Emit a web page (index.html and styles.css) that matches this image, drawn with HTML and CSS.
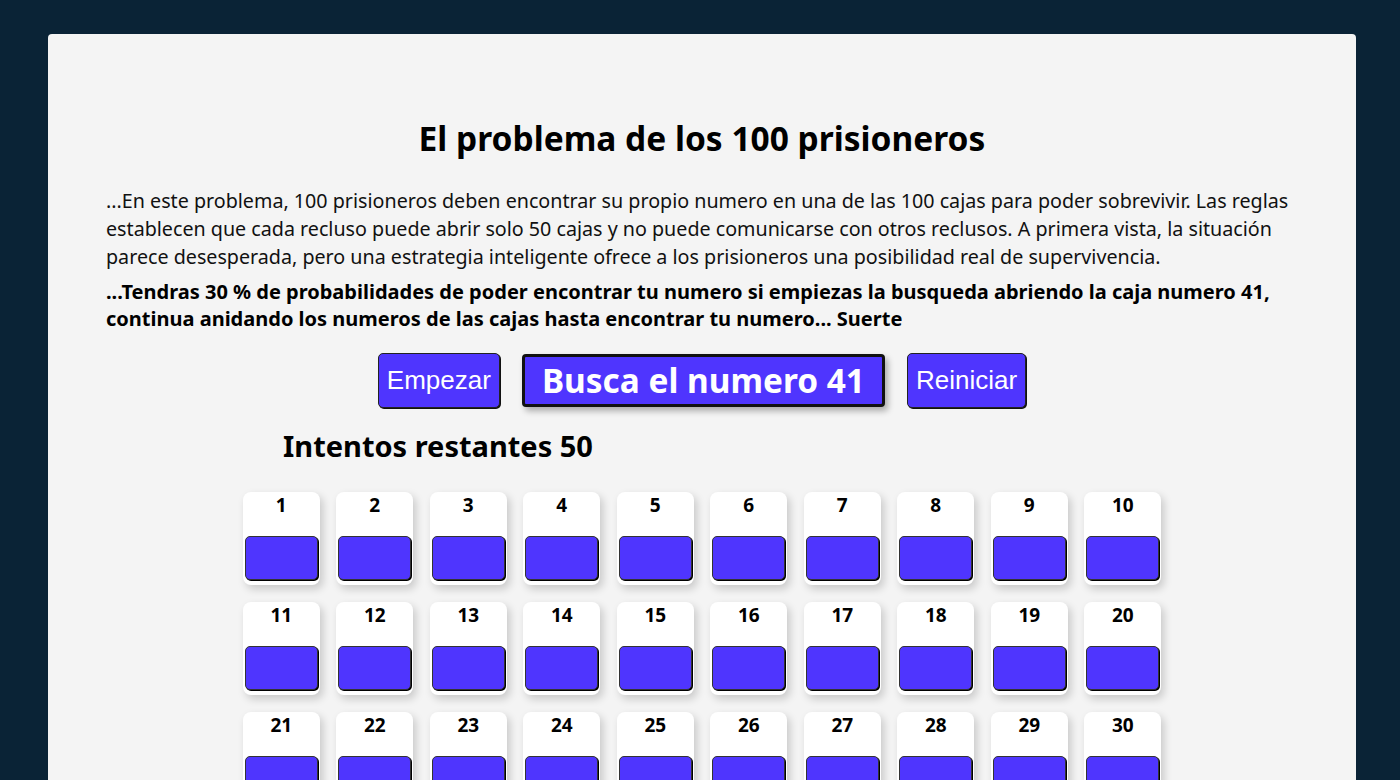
FILE: index.html
```html
<!DOCTYPE html>
<html lang="es">
<head>
<meta charset="utf-8">
<title>El problema de los 100 prisioneros</title>
<link rel="stylesheet" href="styles.css">
</head>
<body>
<main class="panel">
  <h1 class="title">El problema de los 100 prisioneros</h1>
  <p class="intro">...En este problema, 100 prisioneros deben encontrar su propio numero en una de las 100 cajas para poder sobrevivir. Las reglas establecen que cada recluso puede abrir solo 50 cajas y no puede comunicarse con otros reclusos. A primera vista, la situación parece desesperada, pero una estrategia inteligente ofrece a los prisioneros una posibilidad real de supervivencia.</p>
  <p class="hint">...Tendras 30 % de probabilidades de poder encontrar tu numero si empiezas la busqueda abriendo la caja numero 41, continua anidando los numeros de las cajas hasta encontrar tu numero... Suerte</p>
  <div class="controls">
    <button class="btn">Empezar</button>
    <div class="target">Busca el numero 41</div>
    <button class="btn">Reiniciar</button>
  </div>
  <h2 class="tries">Intentos restantes 50</h2>
  <div class="grid">
    <div class="card"><span class="num">1</span><button class="box"></button></div>
    <div class="card"><span class="num">2</span><button class="box"></button></div>
    <div class="card"><span class="num">3</span><button class="box"></button></div>
    <div class="card"><span class="num">4</span><button class="box"></button></div>
    <div class="card"><span class="num">5</span><button class="box"></button></div>
    <div class="card"><span class="num">6</span><button class="box"></button></div>
    <div class="card"><span class="num">7</span><button class="box"></button></div>
    <div class="card"><span class="num">8</span><button class="box"></button></div>
    <div class="card"><span class="num">9</span><button class="box"></button></div>
    <div class="card"><span class="num">10</span><button class="box"></button></div>
    <div class="card"><span class="num">11</span><button class="box"></button></div>
    <div class="card"><span class="num">12</span><button class="box"></button></div>
    <div class="card"><span class="num">13</span><button class="box"></button></div>
    <div class="card"><span class="num">14</span><button class="box"></button></div>
    <div class="card"><span class="num">15</span><button class="box"></button></div>
    <div class="card"><span class="num">16</span><button class="box"></button></div>
    <div class="card"><span class="num">17</span><button class="box"></button></div>
    <div class="card"><span class="num">18</span><button class="box"></button></div>
    <div class="card"><span class="num">19</span><button class="box"></button></div>
    <div class="card"><span class="num">20</span><button class="box"></button></div>
    <div class="card"><span class="num">21</span><button class="box"></button></div>
    <div class="card"><span class="num">22</span><button class="box"></button></div>
    <div class="card"><span class="num">23</span><button class="box"></button></div>
    <div class="card"><span class="num">24</span><button class="box"></button></div>
    <div class="card"><span class="num">25</span><button class="box"></button></div>
    <div class="card"><span class="num">26</span><button class="box"></button></div>
    <div class="card"><span class="num">27</span><button class="box"></button></div>
    <div class="card"><span class="num">28</span><button class="box"></button></div>
    <div class="card"><span class="num">29</span><button class="box"></button></div>
    <div class="card"><span class="num">30</span><button class="box"></button></div>
  </div>
</main>
</body>
</html>
```

FILE: styles.css
```css
html, body {
  margin: 0;
  padding: 0;
}
body {
  background: #0a2336;
  font-family: "Noto Sans", "Open Sans", sans-serif;
  color: #000;
  padding: 34px 44px 0 48px;
  height: 780px;
  box-sizing: border-box;
  overflow: hidden;
}
.panel {
  background: #f4f4f4;
  border-radius: 4px;
  padding: 82px 58px 40px 58px;
  min-height: 900px;
}
.title {
  margin: 0;
  text-align: center;
  font-size: 33.5px;
  line-height: 44px;
  font-weight: 700;
}
.intro {
  margin: 27px 0 0 0;
  font-size: 19.7px;
  line-height: 28px;
  color: #111;
}
.hint {
  margin: 7px 0 0 0;
  font-size: 20px;
  line-height: 27px;
  font-weight: 700;
}
.controls {
  display: flex;
  justify-content: center;
  align-items: center;
  gap: 22px;
  margin-top: 21px;
}
.btn {
  background: #4f35fe;
  color: #fff;
  font-family: "Liberation Sans", Arial, sans-serif;
  font-size: 26px;
  border: 1px solid #222;
  border-radius: 5px;
  height: 55px;
  padding: 0 8px;
  box-shadow: 1px 1px 0 #111;
}
.target {
  background: #4f35fe;
  color: #fff;
  font-size: 33.4px;
  font-weight: 700;
  border: 3px solid #111;
  border-radius: 4px;
  height: 47px;
  line-height: 47px;
  padding: 0 17px;
  box-shadow: 3px 4px 6px rgba(0,0,0,0.3);
}
.tries {
  margin: 18px 0 0 177px;
  font-size: 29px;
  line-height: 40px;
  font-weight: 700;
}
.grid {
  display: grid;
  grid-template-columns: repeat(10, 77px);
  column-gap: 16.5px;
  row-gap: 17px;
  justify-content: center;
  margin-top: 26px;
}
.card {
  background: #fff;
  border-radius: 8px;
  height: 93px;
  display: flex;
  flex-direction: column;
  align-items: center;
  padding: 0 2px 5px;
  box-sizing: border-box;
  box-shadow: 3px 4px 8px rgba(0,0,0,0.18);
}
.num {
  font-size: 19px;
  font-weight: 700;
  line-height: 26px;
  height: 44px;
  flex: none;
}
.box {
  flex: none;
  width: 73px;
  height: 44px;
  background: #4f35fe;
  border: 1px solid #333;
  border-radius: 5px;
  box-shadow: 1px 1px 0 #000;
  padding: 0;
}
```
